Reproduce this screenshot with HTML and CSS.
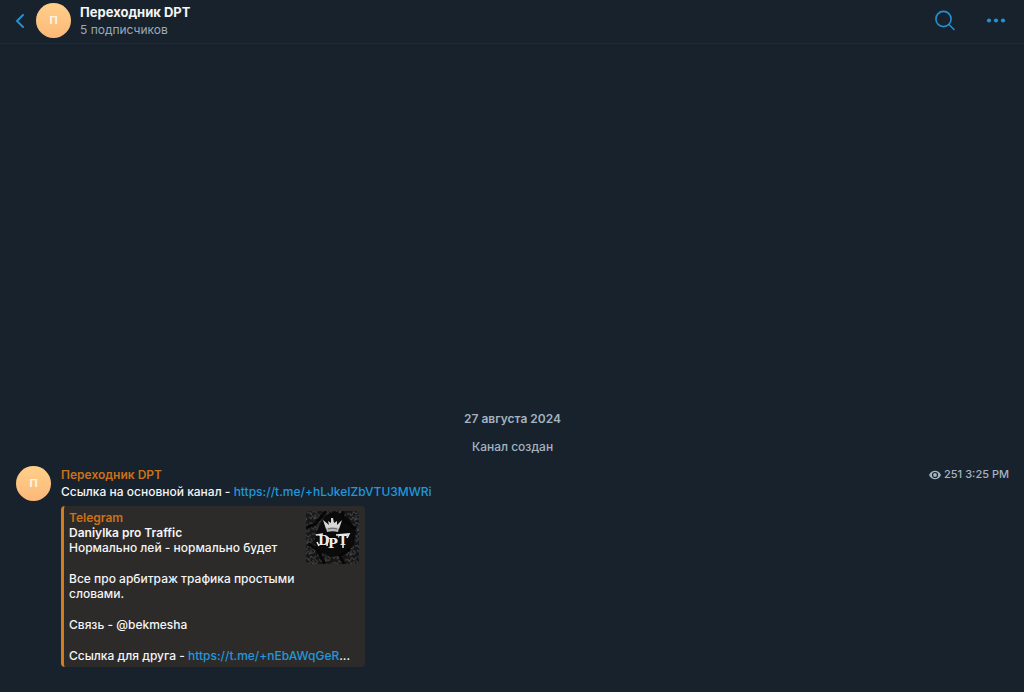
FILE: index.html
```html
<!DOCTYPE html>
<html lang="ru">
<head>
  <meta charset="UTF-8">
  <meta name="viewport" content="width=device-width, initial-scale=1.0">
  <title>Переходник DPT</title>

  <link rel="stylesheet" href="styles.css">
</head>
<body>

  <header class="header">
    <button type="button" class="icon-btn back-btn" aria-label="Назад">
      <svg width="10" height="16" viewBox="0 0 10 16"><path d="M8 2L2 8l6 6" /></svg>
    </button>
    <div class="avatar">П</div>
    <div class="header-info">
      <h1>Переходник DPT</h1>
      <p>5 подписчиков</p>
    </div>
    <div class="header-actions">
      <button type="button" class="icon-btn" aria-label="Поиск">
        <svg width="22" height="22" viewBox="0 0 22 22">
          <circle cx="9.500" cy="9" r="7.600" />
          <path d="M15 14.500l5 5" />
        </svg>
      </button>
      <button type="button" class="icon-btn" aria-label="Меню">
        <svg class="dots" width="20" height="6" viewBox="0 0 20 6">
          <circle cx="3" cy="2.500" r="2.100" />
          <circle cx="10" cy="2.500" r="2.100" />
          <circle cx="17" cy="2.500" r="2.100" />
        </svg>
      </button>
    </div>
  </header>

  <main class="chat">
    <p class="service date">27 августа 2024</p>
    <p class="service">Канал создан</p>

    <article class="message">
      <div class="avatar">П</div>
      <div class="message-body">
        <h2 class="author">Переходник DPT</h2>
        <p>Ссылка на основной канал - <a href="https://t.me/+hLJkeIZbVTU3MWRi">https://t.me/+hLJkeIZbVTU3MWRi</a></p>

        <div class="preview">
          <svg class="preview-photo" width="53" height="53" viewBox="0 0 53 53" role="img" aria-label="Daniylka pro Traffic">
            <defs>
              <pattern id="scribble" width="13" height="11" patternUnits="userSpaceOnUse" patternTransform="rotate(-14)">
                <path d="M0 2h3l1 3 3-4 2 3 3-2M1 6l2 3 2-3 2 3h3M10 5l2 3-2 2M5 10l3-1M8 5v3" fill="none" stroke="#505050" stroke-width="0.900" />
              </pattern>
            </defs>
            <rect width="53" height="53" fill="#161616" />
            <rect width="53" height="53" fill="url(#scribble)" />
            <path d="M20 4l9-4 14 7 7 14-2 12-8 10-14 3-13-5-5-10 4-14z" fill="#0b0b0b" />
            <path d="M0 17l9-4 11-13M2 33l9 5 8 15M37 0l-1 8 14 10M38 53l-4-8 10-7" fill="none" stroke="#070707" stroke-width="3" />
            <path d="M20 18l-3-9 6 5-1-4 3 2 0-5 2 0 1 5 3-2 0 4 5-5-3 9c-4-1-9-1-13 0z" fill="#d8d8d8" />
            <path d="M20 17c4-1 9-1 13 0l-1 4c-4-1-7-1-11 0z" fill="#b5b5b5" />
            <path d="M22 18c3-1 6-1 9 0" fill="none" stroke="#666" />
            <text x="12" y="34">D</text>
            <text x="22" y="37">P</text>
            <text x="32" y="34">T</text>
            <path d="M10 24l7-1M13 35l-2-4M22 26l-1 9M30 24l13-1-2 4M37 37l0-6" fill="none" stroke="#e6e6e6" stroke-width="1.600" />
          </svg>
          <h3 class="author">Telegram</h3>
          <h4>Daniylka pro Traffic</h4>
          <p>Нормально лей - нормально будет</p>
          <p class="paragraph">Все про арбитраж трафика простыми словами.</p>
          <p class="paragraph">Связь - @bekmesha</p>
          <p class="paragraph">Ссылка для друга - <a href="https://t.me/">https://t.me/+nEbAWqGeR</a>...</p>
        </div>
      </div>
      <div class="meta">
        <svg width="12" height="10" viewBox="0 0 12 10">
          <path d="M0 5C1.500 2 3.500.700 6 .700S10.500 2 12 5C10.500 8 8.500 9.300 6 9.300S1.500 8 0 5z" fill="#a3b4c0" />
          <circle cx="6" cy="5" r="2.500" fill="none" stroke="#18222d" stroke-width="1.200" />
        </svg>
        <span>251</span>
        <time>3:25 PM</time>
      </div>
    </article>
  </main>

</body>
</html>
```

FILE: styles.css
```css
* {
  margin: 0;
  padding: 0;
  box-sizing: border-box;
}

body {
  display: flex;
  flex-direction: column;
  min-height: 100vh;
  background-color: #18222d;
  color: #f4f5f6;
  font-family: Inter, "Liberation Sans", sans-serif;
  font-size: 12px;
  font-weight: 500;
  line-height: 17px;
}

h1,
h2,
h3,
h4 {
  font-size: inherit;
  font-weight: 600;
}

a {
  color: #2098dc;
  text-decoration: none;
}

svg {
  display: block;
}

/* Header */
.header {
  display: flex;
  align-items: center;
  padding: 3px 18px 5px 15px;
  border-bottom: 1px solid #202b36;
}

.header h1 {
  font-size: 13px;
  font-weight: 700;
}

.header-info {
  flex: 1;
  margin-left: 9px;
}

.header-info p {
  color: #9aabb8;
  font-weight: 400;
}

.header-actions {
  display: flex;
  align-items: center;
  gap: 30px;
}

.icon-btn {
  border: none;
  background: none;
  cursor: pointer;
}

.icon-btn svg {
  fill: none;
  stroke: #2490d0;
  stroke-width: 1.6px;
  stroke-linecap: round;
}

.icon-btn .dots {
  fill: #2490d0;
  stroke: none;
}

.back-btn {
  margin-right: 11px;
}

.back-btn svg {
  stroke-width: 2px;
}

.avatar {
  flex-shrink: 0;
  width: 35px;
  height: 35px;
  border-radius: 50%;
  background: linear-gradient(#ffd08a, #fcb878);
  color: #fff4e6;
  font-size: 11px;
  font-weight: 700;
  line-height: 35px;
  text-align: center;
}

/* Chat */
.chat {
  flex: 1;
  display: flex;
  flex-direction: column;
  justify-content: flex-end;
  padding: 12px 15px 25px 16px;
}

.service {
  margin-bottom: 11px;
  color: #a3b4c0;
  text-align: center;
}

.date {
  font-weight: 600;
}

.message {
  display: flex;
}

.message-body {
  flex: 1;
  margin-left: 10px;
}

.author {
  color: #cb7118;
}

.meta {
  display: flex;
  align-items: center;
  align-self: flex-start;
  gap: 3px;
  color: #a3b4c0;
  font-size: 11px;
}

/* Link preview */
.preview {
  width: 304px;
  max-width: 100%;
  margin-top: 6px;
  padding: 4px 6px 4px 5px;
  border-left: 3px solid #d57c1c;
  border-radius: 4px;
  background-color: #2d2b2a;
  line-height: 15px;
}

.preview-photo {
  float: right;
  margin: 1px 0 10px 2px;
  border-radius: 3px;
}

.preview-photo text {
  fill: #efefef;
  font-family: "DejaVu Serif", serif;
  font-size: 13px;
  font-weight: 700;
}

.paragraph {
  margin-top: 16px;
}
```
